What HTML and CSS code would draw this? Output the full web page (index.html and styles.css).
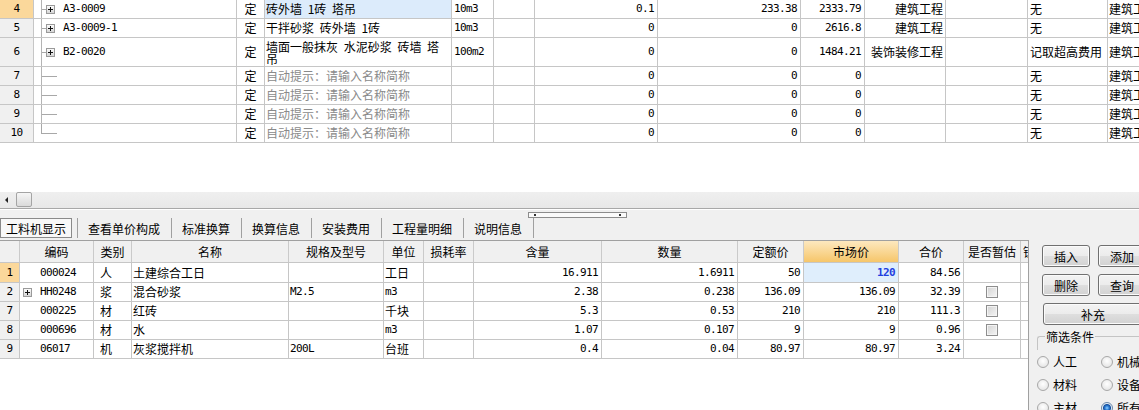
FILE: index.html
```html
<!DOCTYPE html>
<html lang="zh">
<head>
<meta charset="utf-8">
<title>工料机显示</title>
<link rel="stylesheet" href="styles.css">
</head>
<body>
<div class="app">
  <div class="tgrid">
    <div class="tr">
      <div class="c rh sel m">4</div>
      <div class="c code"><span class="tree"></span><span class="pbox"></span><span class="m">A3-0009</span></div>
      <div class="c ctr">定</div>
      <div class="c name hl">砖外墙 1砖 塔吊</div>
      <div class="c m">10m3</div>
      <div class="c"></div>
      <div class="c num m">0.1</div>
      <div class="c num m">233.38</div>
      <div class="c num m">2333.79</div>
      <div class="c r">建筑工程</div>
      <div class="c"></div>
      <div class="c">无</div>
      <div class="c last">建筑工程</div>
    </div>
    <div class="tr">
      <div class="c rh m">5</div>
      <div class="c code"><span class="tree"></span><span class="pbox"></span><span class="m">A3-0009-1</span></div>
      <div class="c ctr">定</div>
      <div class="c name">干拌砂浆 砖外墙 1砖</div>
      <div class="c m">10m3</div>
      <div class="c"></div>
      <div class="c num m">0</div>
      <div class="c num m">0</div>
      <div class="c num m">2616.8</div>
      <div class="c r">建筑工程</div>
      <div class="c"></div>
      <div class="c">无</div>
      <div class="c last">建筑工程</div>
    </div>
    <div class="tr tall">
      <div class="c rh m">6</div>
      <div class="c code"><span class="tree"></span><span class="pbox"></span><span class="m">B2-0020</span></div>
      <div class="c ctr">定</div>
      <div class="c name wrap">墙面一般抹灰 水泥砂浆 砖墙 塔吊</div>
      <div class="c m">100m2</div>
      <div class="c"></div>
      <div class="c num m">0</div>
      <div class="c num m">0</div>
      <div class="c num m">1484.21</div>
      <div class="c r">装饰装修工程</div>
      <div class="c"></div>
      <div class="c">记取超高费用</div>
      <div class="c last">建筑工程</div>
    </div>
    <div class="tr">
      <div class="c rh m">7</div>
      <div class="c code"><span class="tree w"></span></div>
      <div class="c ctr">定</div>
      <div class="c name ph">自动提示：请输入名称简称</div>
      <div class="c"></div>
      <div class="c"></div>
      <div class="c num m">0</div>
      <div class="c num m">0</div>
      <div class="c num m">0</div>
      <div class="c"></div>
      <div class="c"></div>
      <div class="c">无</div>
      <div class="c last">建筑工程</div>
    </div>
    <div class="tr">
      <div class="c rh m">8</div>
      <div class="c code"><span class="tree w"></span></div>
      <div class="c ctr">定</div>
      <div class="c name ph">自动提示：请输入名称简称</div>
      <div class="c"></div>
      <div class="c"></div>
      <div class="c num m">0</div>
      <div class="c num m">0</div>
      <div class="c num m">0</div>
      <div class="c"></div>
      <div class="c"></div>
      <div class="c">无</div>
      <div class="c last">建筑工程</div>
    </div>
    <div class="tr">
      <div class="c rh m">9</div>
      <div class="c code"><span class="tree w"></span></div>
      <div class="c ctr">定</div>
      <div class="c name ph">自动提示：请输入名称简称</div>
      <div class="c"></div>
      <div class="c"></div>
      <div class="c num m">0</div>
      <div class="c num m">0</div>
      <div class="c num m">0</div>
      <div class="c"></div>
      <div class="c"></div>
      <div class="c">无</div>
      <div class="c last">建筑工程</div>
    </div>
    <div class="tr">
      <div class="c rh m">10</div>
      <div class="c code"><span class="tree w end"></span></div>
      <div class="c ctr">定</div>
      <div class="c name ph">自动提示：请输入名称简称</div>
      <div class="c"></div>
      <div class="c"></div>
      <div class="c num m">0</div>
      <div class="c num m">0</div>
      <div class="c num m">0</div>
      <div class="c"></div>
      <div class="c"></div>
      <div class="c">无</div>
      <div class="c last">建筑工程</div>
    </div>
  </div>

  <div class="blank"></div>

  <div class="hscroll">
    <span class="arrow-left"></span>
    <span class="thumb"></span>
  </div>

  <div class="tabbar">
    <div class="tab active">工料机显示</div>
    <div class="sep"></div>
    <div class="tab">查看单价构成</div>
    <div class="tab">标准换算</div>
    <div class="tab">换算信息</div>
    <div class="tab">安装费用</div>
    <div class="tab">工程量明细</div>
    <div class="tab">说明信息</div>
    <div class="grip"></div>
  </div>

  <div class="lbody">
    <div class="bgrid">
      <div class="br head">
        <div class="c"></div>
        <div class="c ctr">编码</div>
        <div class="c ctr">类别</div>
        <div class="c ctr">名称</div>
        <div class="c ctr">规格及型号</div>
        <div class="c ctr">单位</div>
        <div class="c ctr">损耗率</div>
        <div class="c ctr">含量</div>
        <div class="c ctr">数量</div>
        <div class="c ctr">定额价</div>
        <div class="c ctr mkt">市场价</div>
        <div class="c ctr">合价</div>
        <div class="c ctr">是否暂估</div>
        <div class="c lock">锁定</div>
      </div>
      <div class="br first">
        <div class="c rh sel m">1</div>
        <div class="c bcode m">000024</div>
        <div class="c btype">人</div>
        <div class="c bname">土建综合工日</div>
        <div class="c bname m"></div>
        <div class="c bname">工日</div>
        <div class="c"></div>
        <div class="c num m">16.911</div>
        <div class="c num m">1.6911</div>
        <div class="c num m">50</div>
        <div class="c num m cur">120</div>
        <div class="c num m">84.56</div>
        <div class="c ctr"></div>
        <div class="c"></div>
      </div>
      <div class="br">
        <div class="c rh m">2</div>
        <div class="c bcode boxed"><span class="pbox"></span><span class="m">HH0248</span></div>
        <div class="c btype">浆</div>
        <div class="c bname">混合砂浆</div>
        <div class="c bname m">M2.5</div>
        <div class="c bname m">m3</div>
        <div class="c"></div>
        <div class="c num m">2.38</div>
        <div class="c num m">0.238</div>
        <div class="c num m">136.09</div>
        <div class="c num m">136.09</div>
        <div class="c num m">32.39</div>
        <div class="c ctr"><span class="cb"></span></div>
        <div class="c"></div>
      </div>
      <div class="br">
        <div class="c rh m">7</div>
        <div class="c bcode m">000225</div>
        <div class="c btype">材</div>
        <div class="c bname">红砖</div>
        <div class="c bname"></div>
        <div class="c bname">千块</div>
        <div class="c"></div>
        <div class="c num m">5.3</div>
        <div class="c num m">0.53</div>
        <div class="c num m">210</div>
        <div class="c num m">210</div>
        <div class="c num m">111.3</div>
        <div class="c ctr"><span class="cb"></span></div>
        <div class="c"></div>
      </div>
      <div class="br">
        <div class="c rh m">8</div>
        <div class="c bcode m">000696</div>
        <div class="c btype">材</div>
        <div class="c bname">水</div>
        <div class="c bname"></div>
        <div class="c bname m">m3</div>
        <div class="c"></div>
        <div class="c num m">1.07</div>
        <div class="c num m">0.107</div>
        <div class="c num m">9</div>
        <div class="c num m">9</div>
        <div class="c num m">0.96</div>
        <div class="c ctr"><span class="cb"></span></div>
        <div class="c"></div>
      </div>
      <div class="br">
        <div class="c rh m">9</div>
        <div class="c bcode m">06017</div>
        <div class="c btype">机</div>
        <div class="c bname">灰浆搅拌机</div>
        <div class="c bname m">200L</div>
        <div class="c bname">台班</div>
        <div class="c"></div>
        <div class="c num m">0.4</div>
        <div class="c num m">0.04</div>
        <div class="c num m">80.97</div>
        <div class="c num m">80.97</div>
        <div class="c num m">3.24</div>
        <div class="c ctr"></div>
        <div class="c"></div>
      </div>
    </div>

    <div class="side">
      <div class="btnrow">
        <div class="btn">插入</div>
        <div class="btn">添加</div>
      </div>
      <div class="btnrow">
        <div class="btn">删除</div>
        <div class="btn">查询</div>
      </div>
      <div class="btnrow last">
        <div class="btn wide">补充</div>
      </div>
      <div class="group">
        <div class="gtitle"><span>筛选条件</span></div>
        <div class="gleft"></div>
        <div class="rrow">
          <div class="ritem"><span class="rb"></span>人工</div>
          <div class="ritem"><span class="rb"></span>机械</div>
        </div>
        <div class="rrow">
          <div class="ritem"><span class="rb"></span>材料</div>
          <div class="ritem"><span class="rb"></span>设备</div>
        </div>
        <div class="rrow">
          <div class="ritem"><span class="rb"></span>主材</div>
          <div class="ritem"><span class="rb on"></span>所有</div>
        </div>
      </div>
    </div>
  </div>
</div>
</body>
</html>
```

FILE: styles.css
```css
* { box-sizing: border-box; }
html, body { margin: 0; padding: 0; }
body {
  width: 1139px;
  height: 410px;
  overflow: hidden;
  background: #fff;
  font-family: "Noto Sans CJK SC", "Noto Sans", sans-serif;
  font-size: 12px;
  color: #000;
}
.app { width: 1139px; height: 410px; overflow: hidden; }

.m {
  font-family: "DejaVu Sans Mono", "Noto Sans CJK SC", monospace;
  font-size: 11px;
  letter-spacing: -0.62px;
}

/* ---------- top grid ---------- */
.tgrid { height: 143px; overflow: hidden; width: 1139px; }
.tr {
  display: grid;
  grid-template-columns: 34px 203px 28px 187px 42px 41px 123px 143px 64px 81px 82px 80px 60px;
  height: 19px;
  border-bottom: 1px solid #c6c6c6;
}
.tr.tall { height: 29px; }

.c {
  border-right: 1px solid #c6c6c6;
  display: flex;
  align-items: center;
  padding: 0 2px;
  overflow: hidden;
  white-space: nowrap;
  line-height: 14px;
  min-width: 0;
}
.c:last-child { border-right: none; }
.ctr { justify-content: center; }
.r { justify-content: flex-end; padding-right: 2px; }
.num { justify-content: flex-end; padding-right: 3px; }
.rh { justify-content: center; background: #f0f0f0; padding: 0; }
.rh.sel { background: #fbd89b; }
.name { padding-left: 1px; word-spacing: 3px; }
.name.hl { background: #dcebfb; }
.name.wrap { white-space: normal; line-height: 12px; align-items: center; padding-top: 1px; }
.ph { color: #8a8a8a; }
.last { padding-left: 1px; }

.code { padding-left: 7px; }
.tree {
  align-self: stretch;
  width: 5px;
  flex: none;
  background:
    linear-gradient(#b4b4b4, #b4b4b4) left top / 1px 100% no-repeat,
    linear-gradient(#a8a8a8, #a8a8a8) left center / 100% 1px no-repeat;
}
.tree.w { width: 16px; }
.tree.end {
  background:
    linear-gradient(#a8a8a8, #a8a8a8) left top / 1px 50% no-repeat,
    linear-gradient(#a8a8a8, #a8a8a8) left center / 100% 1px no-repeat;
}
.pbox {
  width: 9px;
  height: 9px;
  flex: none;
  border: 1px solid #9a9a9a;
  margin-right: 8px;
  background:
    linear-gradient(#111, #111) center / 5px 1px no-repeat,
    linear-gradient(#111, #111) center / 1px 5px no-repeat,
    linear-gradient(#fbfbfb, #d6d6d6);
}

/* ---------- blank + scroll ---------- */
.blank { height: 49px; background: #fff; }
.hscroll {
  height: 17px;
  background: linear-gradient(#efefef, #e8e8e8);
  border-bottom: 1px solid #a8a8a8;
  display: flex;
  align-items: center;
  padding-left: 5px;
}
.arrow-left {
  width: 0;
  height: 0;
  border-top: 3px solid transparent;
  border-bottom: 3px solid transparent;
  border-right: 3px solid #222;
  margin-right: 8px;
}
.thumb {
  width: 16px;
  height: 15px;
  align-self: flex-start;
  border: 1px solid #a4a4a4;
  border-radius: 2px;
  background: linear-gradient(#f6f6f6, #dadada);
}

/* ---------- tabs ---------- */
.tabbar {
  height: 31px;
  background: #f0f0f0;
  border-top: 1px solid #fff;
  padding-top: 8px;
  display: flex;
  align-items: flex-start;
  position: relative;
}
.tab {
  height: 20px;
  padding: 0 11px 0 10px;
  border-right: 1px solid #a0a0a0;
  display: flex;
  align-items: center;
  white-space: nowrap;
}
.tab.active {
  border: 1px solid #8a8a8a;
  padding: 0 5px;
  background: #f8f8f8;
  margin-right: 5px;
  height: 20px;
}
.sep { width: 1px; height: 20px; background: #a0a0a0; }
.grip {
  position: absolute;
  left: 528px;
  top: 2px;
  width: 99px;
  height: 6px;
  border: 1px solid #8c8c8c;
  background:
    linear-gradient(#333, #333) 5px 1px / 2px 2px no-repeat,
    linear-gradient(#333, #333) right 5px top 1px / 2px 2px no-repeat,
    #fafafa;
}

/* ---------- lower body ---------- */
.lbody { display: flex; height: 170px; background: #f0f0f0; }
.bgrid {
  width: 1029px;
  flex: none;
  border-top: 1px solid #a0a0a0;
  border-right: 1px solid #a0a0a0;
  background: #fff;
}
.br {
  display: grid;
  grid-template-columns: 20px 74px 38px 157px 95px 40px 50px 128px 136px 66px 95px 65px 57px 7px;
  height: 19px;
  border-bottom: 1px solid #c6c6c6;
}
.br.head { height: 22px; background: #f0f0f0; }
.br.first { height: 20px; }
.br.head .c { border-right-color: #cacaca; }
.mkt { background: linear-gradient(#fde8bf, #f6c66a); }
.lock { padding-left: 2px; }
.bcode { padding-left: 20px; }
.bcode.boxed { padding-left: 3px; }
.btype { padding-left: 6px; }
.bname { padding-left: 1px; }
.cur { background: #dfeefc; color: #1f3fe0; font-weight: bold; }
.cb {
  width: 12px;
  height: 12px;
  border: 1px solid #8e8e8e;
  box-shadow: inset 0 0 0 1px #f4f4f4;
  background: linear-gradient(135deg, #d2d2d2, #f6f6f6);
}

/* ---------- side panel ---------- */
.side {
  flex: 1;
  background: #f0f0f0;
  padding: 5px 0 0 13px;
  overflow: hidden;
  min-width: 0;
}
.btnrow { display: flex; gap: 8px; margin-bottom: 7px; }
.btnrow.last { margin-bottom: 5px; }
.btn {
  width: 48px;
  height: 22px;
  flex: none;
  border: 1px solid #707070;
  border-radius: 3px;
  background: linear-gradient(#f3f3f3, #ececec 48%, #dedede 52%, #d2d2d2);
  box-shadow: inset 0 0 0 1px #fbfbfb;
  display: flex;
  align-items: center;
  justify-content: center;
}
.btn.wide { width: 100px; }

.group { margin-left: -5px; }
.gtitle { display: flex; height: 14px; line-height: 14px; white-space: nowrap; }
.gtitle::before {
  content: "";
  width: 7px;
  height: 7px;
  flex: none;
  align-self: flex-end;
  border-top: 1px solid #c4c4c4;
  border-left: 1px solid #c4c4c4;
  border-top-left-radius: 3px;
}
.gtitle span { padding: 0 1px; }
.gtitle::after {
  content: "";
  flex: 1;
  height: 7px;
  align-self: flex-end;
  border-top: 1px solid #c4c4c4;
}
.gleft { height: 6px; border-left: 1px solid #c4c4c4; }
.rrow {
  display: grid;
  grid-template-columns: 64px 60px;
  height: 23px;
  align-items: center;
}
.ritem { display: flex; align-items: center; gap: 4px; white-space: nowrap; }
.rb {
  width: 12px;
  height: 12px;
  flex: none;
  border-radius: 50%;
  border: 1px solid #a8a8a8;
  background: radial-gradient(circle at 50% 40%, #ffffff, #dedede);
}
.rb.on {
  border-color: #6c88a8;
  background: radial-gradient(circle, #8fd0ff 0, #2f7fd8 2px, #154f9c 3.5px, #e6eef6 4.5px);
}
```
